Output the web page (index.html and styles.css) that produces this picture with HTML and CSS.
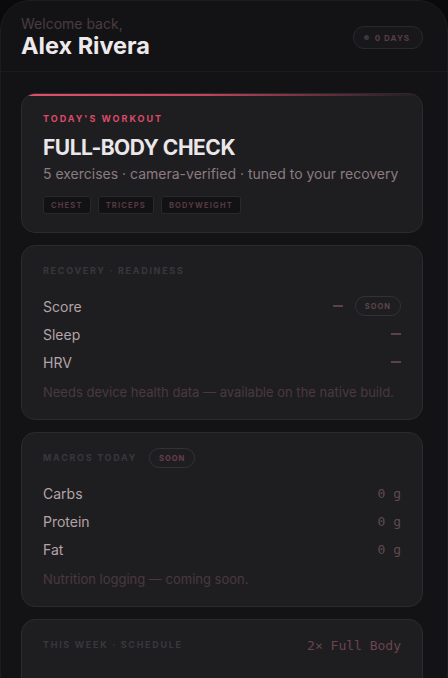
FILE: index.html
```html
<!DOCTYPE html>
<html lang="en">
<head>
  <meta charset="UTF-8">
  <title>Today</title>
  <meta name="viewport" content="width=device-width, initial-scale=1.0">
  <link rel="stylesheet" href="styles.css">
</head>
<body>
  <div class="app">
    <header class="top">
      <div>
        <div class="hello">Welcome back,</div>
        <div class="name">Alex Rivera</div>
      </div>
      <div class="streak"><span class="dot"></span>0 DAYS</div>
    </header>

    <main class="cards">
      <section class="card workout">
        <div class="label accent">TODAY'S WORKOUT</div>
        <h1 class="title">FULL-BODY CHECK</h1>
        <p class="sub">5 exercises · camera-verified · tuned to your recovery</p>
        <div class="tags">
          <span class="tag">CHEST</span>
          <span class="tag">TRICEPS</span>
          <span class="tag">BODYWEIGHT</span>
        </div>
      </section>

      <section class="card">
        <div class="label">RECOVERY · READINESS</div>
        <div class="rows">
          <div class="row"><span>Score</span><span class="val"><span class="dash"></span><span class="pill">SOON</span></span></div>
          <div class="row"><span>Sleep</span><span class="val"><span class="dash"></span></span></div>
          <div class="row"><span>HRV</span><span class="val"><span class="dash"></span></span></div>
        </div>
        <p class="note">Needs device health data — available on the native build.</p>
      </section>

      <section class="card">
        <div class="head"><span class="label">MACROS TODAY</span><span class="pill">SOON</span></div>
        <div class="rows">
          <div class="row"><span>Carbs</span><span class="val mono">0 g</span></div>
          <div class="row"><span>Protein</span><span class="val mono">0 g</span></div>
          <div class="row"><span>Fat</span><span class="val mono">0 g</span></div>
        </div>
        <p class="note">Nutrition logging — coming soon.</p>
      </section>

      <section class="card">
        <div class="head split"><span class="label">THIS WEEK · SCHEDULE</span><span class="plan mono">2× Full Body</span></div>
        <div class="week"></div>
      </section>
    </main>
  </div>
</body>
</html>
```

FILE: styles.css
```css
html, body {
  margin: 0;
  height: 100%;
  overflow: hidden;
}

body {
  background: #0a0a0c;
  font-family: Inter, "Noto Sans", sans-serif;
  color: #b8a8ab;
}

.app {
  background: #131316;
  border: 1px solid #1d1d21;
  border-radius: 30px 30px 0 0;
  min-height: 100%;
  box-sizing: border-box;
}

.top {
  display: flex;
  justify-content: space-between;
  align-items: center;
  padding: 14px 24px 12px 20px;
  border-bottom: 1px solid #1b1b1e;
}

.hello {
  font-size: 14px;
  line-height: 18px;
  color: #4b3b3e;
}

.name {
  font-size: 23.5px;
  line-height: 26px;
  font-weight: 700;
  color: #eeeaec;
}

.streak {
  display: flex;
  align-items: center;
  gap: 6px;
  height: 21px;
  padding: 0 12px 0 10px;
  border: 1px solid #29292d;
  border-radius: 11px;
  background: #18181b;
  font-size: 8px;
  font-weight: 700;
  letter-spacing: 1px;
  color: #5a3d43;
  margin-top: 1px;
}

.dot {
  width: 5px;
  height: 5px;
  border-radius: 50%;
  background: #3a3a3e;
}

.cards {
  display: flex;
  flex-direction: column;
  gap: 12px;
  padding: 21px 24px 0 20px;
}

.card {
  position: relative;
  background: #1e1e21;
  border: 1px solid #2b2b2f;
  border-radius: 14px;
  padding: 19px 21px 18px;
  overflow: hidden;
}

.workout::before {
  content: "";
  position: absolute;
  left: 0;
  right: 0;
  top: 0;
  height: 2px;
  background: linear-gradient(90deg, #e0506c 0%, #c4445e 45%, rgba(180, 60, 85, 0.15) 92%, transparent 100%);
}

.label {
  font-size: 9px;
  line-height: 12px;
  font-weight: 700;
  letter-spacing: 1.7px;
  color: #38383c;
}

.label.accent {
  color: #de4a68;
  letter-spacing: 2px;
}

.title {
  margin: 10px 0 0;
  font-size: 21px;
  line-height: 26px;
  font-weight: 700;
  color: #ebe7e9;
  letter-spacing: -0.5px;
}

.sub {
  margin: 3px 0 0;
  font-size: 14px;
  line-height: 20px;
  color: #8c7b7f;
}

.tags {
  display: flex;
  gap: 7px;
  margin-top: 12px;
}

.tag {
  font-size: 7.5px;
  font-weight: 700;
  letter-spacing: 1.2px;
  color: #553a40;
  background: #121214;
  border: 1px solid #29292c;
  border-radius: 3px;
  padding: 4px 7px 3px;
}

.rows {
  margin-top: 15px;
}

.row {
  display: flex;
  justify-content: space-between;
  align-items: center;
  height: 28px;
  font-size: 14px;
  color: #b4a3a7;
}

.val {
  display: flex;
  align-items: center;
  gap: 12px;
  color: #5e4a4e;
}

.dash {
  width: 10px;
  height: 1.5px;
  background: #5a4248;
}

.mono {
  font-family: "DejaVu Sans Mono", monospace;
  font-size: 13px;
}

.pill {
  display: inline-flex;
  align-items: center;
  height: 18px;
  padding: 0 9px;
  border: 1px solid #323236;
  border-radius: 10px;
  font-size: 7.5px;
  font-weight: 700;
  letter-spacing: 1px;
  color: #5a4649;
}

.note {
  margin: 7px 0 0;
  font-size: 13px;
  line-height: 18px;
  color: #4a393c;
}

.head {
  display: flex;
  align-items: center;
  gap: 12px;
  height: 12px;
}

.head .pill {
  color: #6a3e47;
}

.split {
  justify-content: space-between;
}

.plan {
  color: #6b444c;
}

.week {
  height: 80px;
}
```
